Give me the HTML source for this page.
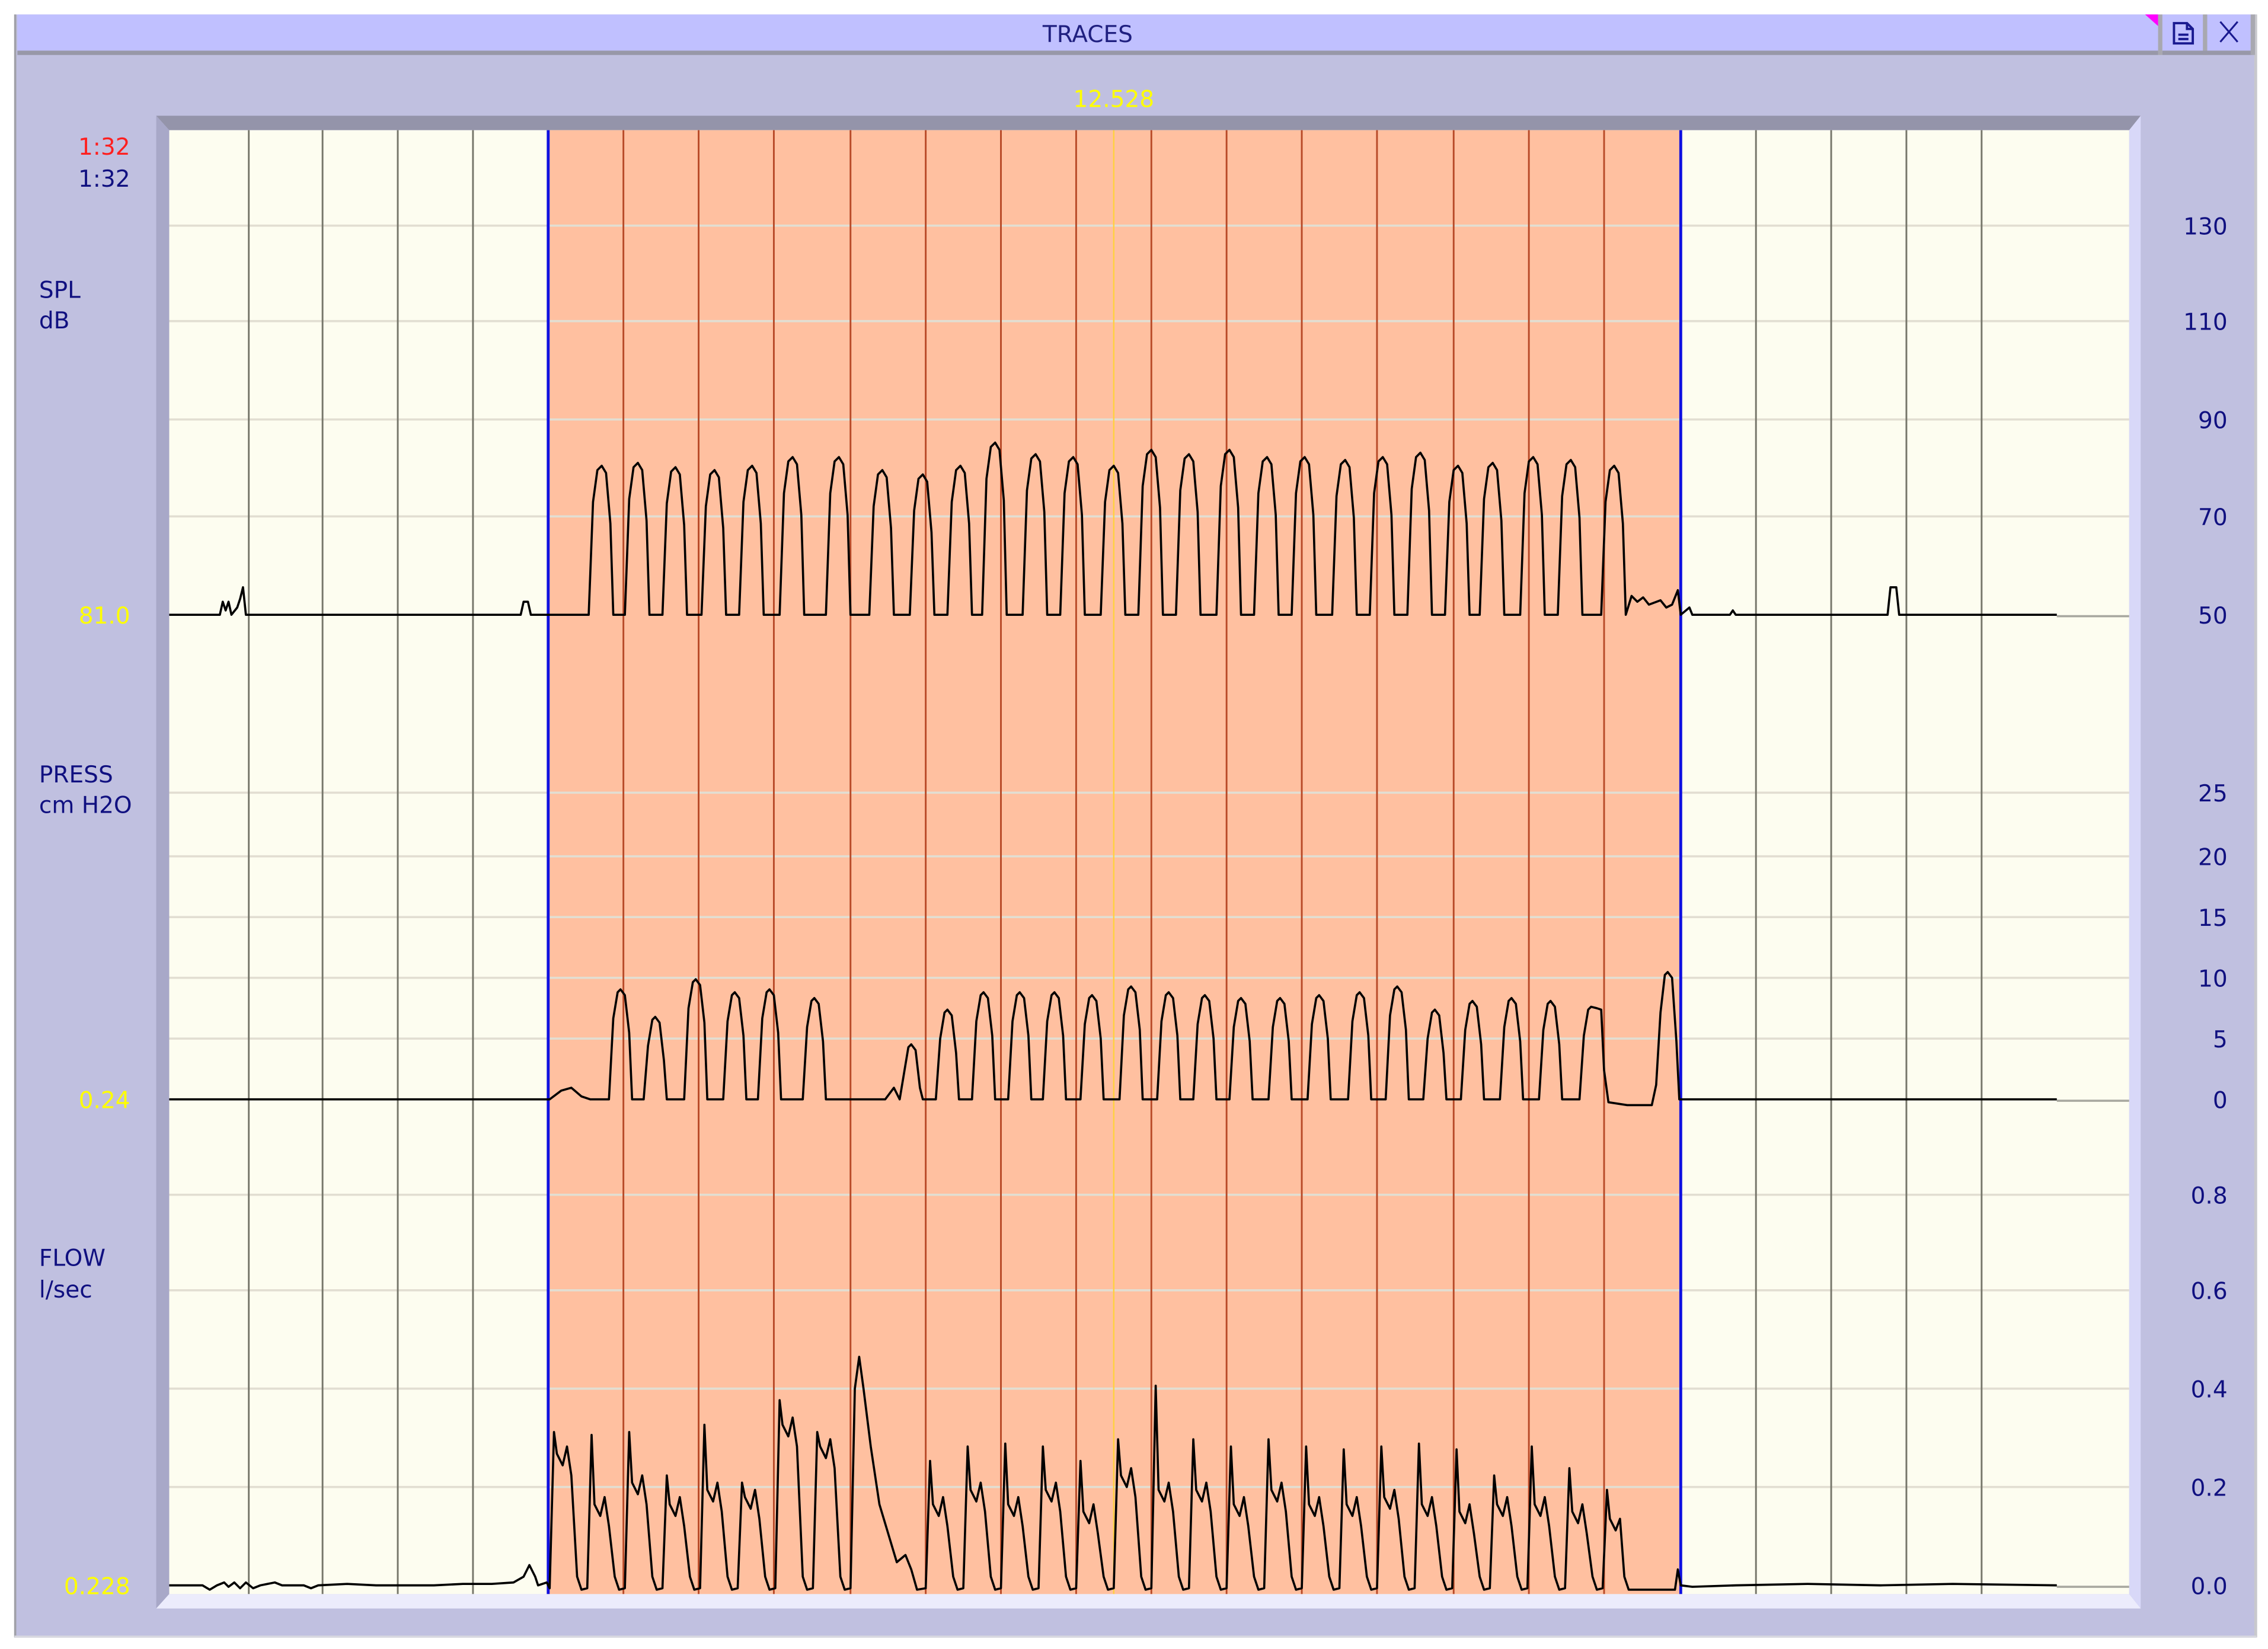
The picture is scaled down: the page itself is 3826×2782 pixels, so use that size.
<!DOCTYPE html>
<html><head><meta charset="utf-8"><style>
html,body{margin:0;padding:0;background:#fff;width:3826px;height:2782px;overflow:hidden}
svg{display:block}
text{font-family:"DejaVu Sans","Liberation Sans",sans-serif;font-size:16px}
</style></head><body>
<svg width="3826" height="2782" viewBox="0 0 1568 1140" preserveAspectRatio="none" xmlns="http://www.w3.org/2000/svg">
<rect x="0" y="0" width="1568" height="1140" fill="#fff"/>
<rect x="10" y="10" width="1550" height="1122" fill="#c0c0e0"/>
<line x1="10.5" y1="10" x2="10.5" y2="1132" stroke="#a0a0a8" stroke-width="1.5"/>
<line x1="1559.5" y1="10" x2="1559.5" y2="1132" stroke="#c8c8cc" stroke-width="2"/>
<line x1="10" y1="1131.5" x2="1560" y2="1131.5" stroke="#d8d8e0" stroke-width="1.5"/>
<rect x="12" y="10" width="1480" height="26" fill="#c0c0ff"/>
<rect x="12" y="35" width="1480" height="3" fill="#9898a8"/>
<polygon points="1483,10 1492,10 1492,18" fill="#ff00ff"/>
<rect x="1492" y="10" width="3" height="28" fill="#a8a8b0"/>
<rect x="1495" y="10" width="28" height="26" fill="#c0c0ff"/>
<rect x="1523" y="10" width="3" height="28" fill="#a8a8b0"/>
<rect x="1526" y="10" width="30" height="26" fill="#c0c0ff"/>
<rect x="1495" y="35" width="62" height="3" fill="#9898a8"/>
<rect x="1556" y="10" width="3" height="28" fill="#a8a8b0"/>
<g stroke="#1a1a90" fill="none" stroke-width="1.6">
<path d="M1503,16 L1512,16 L1516,20 L1516,30 L1503,30 Z"/>
<path d="M1512,16 L1512,20 L1516,20"/>
<line x1="1506" y1="24" x2="1513" y2="24"/><line x1="1506" y1="27" x2="1513" y2="27"/>
<path d="M1535,15 L1547,29 M1547,15 L1535,29" stroke-width="1.3"/>
</g>
<text x="752" y="29" text-anchor="middle" fill="#202080">TRACES</text>
<text x="770" y="74" text-anchor="middle" fill="#ffff00">12.528</text>
<polygon points="108,80 1480,80 1472,90 117,90" fill="#9494aa"/>
<polygon points="108,80 117,90 117,1102 108,1112" fill="#a8a8c8"/>
<polygon points="1480,80 1480,1112 1472,1102 1472,90" fill="#d8d8f8"/>
<polygon points="108,1112 117,1102 1472,1102 1480,1112" fill="#ececfc"/>
<rect x="117" y="90" width="1355" height="1012" fill="#fdfdf0"/>
<rect x="379" y="90" width="783" height="1012" fill="#ffc0a0"/>
<g stroke="#e2ded2" stroke-width="1.5">
<line x1="117" y1="156" x2="1472" y2="156"/><line x1="117" y1="222" x2="1472" y2="222"/>
<line x1="117" y1="290" x2="1472" y2="290"/><line x1="117" y1="357" x2="1472" y2="357"/>
<line x1="117" y1="548" x2="1472" y2="548"/><line x1="117" y1="592" x2="1472" y2="592"/>
<line x1="117" y1="634" x2="1472" y2="634"/><line x1="117" y1="676" x2="1472" y2="676"/>
<line x1="117" y1="718" x2="1472" y2="718"/><line x1="117" y1="826" x2="1472" y2="826"/>
<line x1="117" y1="892" x2="1472" y2="892"/><line x1="117" y1="960" x2="1472" y2="960"/>
<line x1="117" y1="1028" x2="1472" y2="1028"/>
</g>
<g stroke="#a8a8a0" stroke-width="1.5">
<line x1="1422" y1="426" x2="1472" y2="426"/><line x1="1422" y1="761" x2="1472" y2="761"/><line x1="1422" y1="1097" x2="1472" y2="1097"/>
</g>
<g stroke="#76766a" stroke-width="1.2">
<line x1="172" y1="90" x2="172" y2="1102"/><line x1="223" y1="90" x2="223" y2="1102"/>
<line x1="275" y1="90" x2="275" y2="1102"/><line x1="327" y1="90" x2="327" y2="1102"/>
<line x1="1214" y1="90" x2="1214" y2="1102"/><line x1="1266" y1="90" x2="1266" y2="1102"/>
<line x1="1318" y1="90" x2="1318" y2="1102"/><line x1="1370" y1="90" x2="1370" y2="1102"/>
</g>
<g stroke="#b84a28" stroke-width="1.2">
<line x1="431" y1="90" x2="431" y2="1102"/><line x1="483" y1="90" x2="483" y2="1102"/>
<line x1="535" y1="90" x2="535" y2="1102"/><line x1="588" y1="90" x2="588" y2="1102"/>
<line x1="640" y1="90" x2="640" y2="1102"/><line x1="692" y1="90" x2="692" y2="1102"/>
<line x1="744" y1="90" x2="744" y2="1102"/><line x1="796" y1="90" x2="796" y2="1102"/>
<line x1="848" y1="90" x2="848" y2="1102"/><line x1="900" y1="90" x2="900" y2="1102"/>
<line x1="952" y1="90" x2="952" y2="1102"/><line x1="1005" y1="90" x2="1005" y2="1102"/>
<line x1="1057" y1="90" x2="1057" y2="1102"/><line x1="1109" y1="90" x2="1109" y2="1102"/>
</g>
<line x1="770" y1="90" x2="770" y2="1102" stroke="#ffd040" stroke-width="1"/>
<g stroke="#1010e0" stroke-width="2">
<line x1="379" y1="90" x2="379" y2="1102"/><line x1="1162" y1="90" x2="1162" y2="1102"/>
</g>
<g fill="none" stroke="#000" stroke-width="1.5" stroke-linejoin="round">
<path d="M117,425 L152,425 L154,416 L156,422 L158,416 L160,425 L164,420 L166,414 L168,406 L170,425 L360,425 L362,416 L365,416 L367,425 L407,425 L410,347 L413,325 L416,322 L419,327 L422,362 L424,425 L432,425 L435,345 L438,323 L441,320 L444,325 L447,360 L449,425 L458,425 L461,348 L464,326 L467,323 L470,328 L473,363 L475,425 L485,425 L488,350 L491,328 L494,325 L497,330 L500,365 L502,425 L511,425 L514,347 L517,325 L520,322 L523,327 L526,362 L528,425 L539,425 L542,341 L545,319 L548,316 L551,321 L554,356 L556,425 L571,425 L574,341 L577,319 L580,316 L583,321 L586,356 L588,425 L601,425 L604,350 L607,328 L610,325 L613,330 L616,365 L618,425 L629,425 L632,353 L635,331 L638,328 L641,333 L644,368 L646,425 L655,425 L658,347 L661,325 L664,322 L667,327 L670,362 L672,425 L679,425 L682,331 L685,309 L688,306 L691,311 L694,346 L696,425 L707,425 L710,339 L713,317 L716,314 L719,319 L722,354 L724,425 L733,425 L736,341 L739,319 L742,316 L745,321 L748,356 L750,425 L761,425 L764,347 L767,325 L770,322 L773,327 L776,362 L778,425 L787,425 L790,336 L793,314 L796,311 L799,316 L802,351 L804,425 L813,425 L816,339 L819,317 L822,314 L825,319 L828,354 L830,425 L841,425 L844,336 L847,314 L850,311 L853,316 L856,351 L858,425 L867,425 L870,341 L873,319 L876,316 L879,321 L882,356 L884,425 L893,425 L896,341 L899,319 L902,316 L905,321 L908,356 L910,425 L921,425 L924,343 L927,321 L930,318 L933,323 L936,358 L938,425 L947,425 L950,341 L953,319 L956,316 L959,321 L962,356 L964,425 L973,425 L976,338 L979,316 L982,313 L985,318 L988,353 L990,425 L999,425 L1002,347 L1005,325 L1008,322 L1011,327 L1014,362 L1016,425 L1023,425 L1026,345 L1029,323 L1032,320 L1035,325 L1038,360 L1040,425 L1051,425 L1054,341 L1057,319 L1060,316 L1063,321 L1066,356 L1068,425 L1077,425 L1080,343 L1083,321 L1086,318 L1089,323 L1092,358 L1094,425 L1107,425 L1110,347 L1113,325 L1116,322 L1119,327 L1122,362 L1124,425 L1128,412 L1132,416 L1136,413 L1140,418 L1148,415 L1152,420 L1156,418 L1160,408 L1162,425 L1168,420 L1170,425 L1196,425 L1198,422 L1200,425 L1305,425 L1307,406 L1311,406 L1313,425 L1422,425"/>
<path d="M117,760 L380,760 L388,754 L395,752 L402,758 L408,760 L421,760 L424,704 L427,686 L429,684 L432,688 L435,714 L437,760 L445,760 L448,723 L451,705 L453,703 L456,707 L459,733 L461,760 L473,760 L476,697 L479,679 L481,677 L484,681 L487,707 L489,760 L500,760 L503,706 L506,688 L508,686 L511,690 L514,716 L516,760 L524,760 L527,704 L530,686 L532,684 L535,688 L538,714 L540,760 L555,760 L558,710 L561,692 L563,690 L566,694 L569,720 L571,760 L612,760 L618,752 L622,760 L625,742 L628,724 L630,722 L633,726 L636,752 L638,760 L647,760 L650,718 L653,700 L655,698 L658,702 L661,728 L663,760 L672,760 L675,706 L678,688 L680,686 L683,690 L686,716 L688,760 L697,760 L700,706 L703,688 L705,686 L708,690 L711,716 L713,760 L721,760 L724,706 L727,688 L729,686 L732,690 L735,716 L737,760 L747,760 L750,708 L753,690 L755,688 L758,692 L761,718 L763,760 L774,760 L777,702 L780,684 L782,682 L785,686 L788,712 L790,760 L800,760 L803,706 L806,688 L808,686 L811,690 L814,716 L816,760 L825,760 L828,708 L831,690 L833,688 L836,692 L839,718 L841,760 L850,760 L853,710 L856,692 L858,690 L861,694 L864,720 L866,760 L877,760 L880,710 L883,692 L885,690 L888,694 L891,720 L893,760 L904,760 L907,708 L910,690 L912,688 L915,692 L918,718 L920,760 L932,760 L935,706 L938,688 L940,686 L943,690 L946,716 L948,760 L958,760 L961,702 L964,684 L966,682 L969,686 L972,712 L974,760 L984,760 L987,718 L990,700 L992,698 L995,702 L998,728 L1000,760 L1010,760 L1013,712 L1016,694 L1018,692 L1021,696 L1024,722 L1026,760 L1037,760 L1040,710 L1043,692 L1045,690 L1048,694 L1051,720 L1053,760 L1064,760 L1067,712 L1070,694 L1072,692 L1075,696 L1078,722 L1080,760 L1092,760 L1095,716 L1098,698 L1100,696 L1104,697 L1107,698 L1109,740 L1112,762 L1125,764 L1142,764 L1145,750 L1148,700 L1151,674 L1153,672 L1156,676 L1159,720 L1161,760 L1422,760"/>
<path d="M117,1096 L140,1096 L145,1099 L150,1096 L155,1094 L158,1097 L162,1094 L166,1098 L170,1094 L175,1098 L180,1096 L185,1095 L190,1094 L195,1096 L210,1096 L215,1098 L220,1096 L240,1095 L260,1096 L300,1096 L320,1095 L340,1095 L355,1094 L362,1090 L366,1082 L370,1090 L372,1096 L378,1094 L380,1098 L383,990 L385,1005 L389,1013 L392,1000 L395,1020 L399,1090 L402,1099 L406,1098 L409,992 L411,1040 L415,1048 L418,1035 L421,1055 L425,1090 L428,1099 L432,1098 L435,990 L437,1025 L441,1033 L444,1020 L447,1040 L451,1090 L454,1099 L458,1098 L461,1020 L463,1040 L467,1048 L470,1035 L473,1055 L477,1090 L480,1099 L484,1098 L487,985 L489,1030 L493,1038 L496,1025 L499,1045 L503,1090 L506,1099 L510,1098 L513,1025 L515,1035 L519,1043 L522,1030 L525,1050 L529,1090 L532,1099 L536,1098 L539,968 L541,985 L545,993 L548,980 L551,1000 L555,1090 L558,1099 L562,1098 L565,990 L567,1000 L571,1008 L574,995 L577,1015 L581,1090 L584,1099 L588,1098 L591,960 L594,938 L597,960 L602,1000 L608,1040 L614,1060 L620,1080 L626,1075 L630,1085 L634,1099 L640,1098 L643,1010 L645,1040 L649,1048 L652,1035 L655,1055 L659,1090 L662,1099 L666,1098 L669,1000 L671,1030 L675,1038 L678,1025 L681,1045 L685,1090 L688,1099 L692,1098 L695,998 L697,1040 L701,1048 L704,1035 L707,1055 L711,1090 L714,1099 L718,1098 L721,1000 L723,1030 L727,1038 L730,1025 L733,1045 L737,1090 L740,1099 L744,1098 L747,1010 L749,1045 L753,1053 L756,1040 L759,1060 L763,1090 L766,1099 L770,1098 L773,995 L775,1020 L779,1028 L782,1015 L785,1035 L789,1090 L792,1099 L796,1098 L799,958 L801,1030 L805,1038 L808,1025 L811,1045 L815,1090 L818,1099 L822,1098 L825,995 L827,1030 L831,1038 L834,1025 L837,1045 L841,1090 L844,1099 L848,1098 L851,1000 L853,1040 L857,1048 L860,1035 L863,1055 L867,1090 L870,1099 L874,1098 L877,995 L879,1030 L883,1038 L886,1025 L889,1045 L893,1090 L896,1099 L900,1098 L903,1000 L905,1040 L909,1048 L912,1035 L915,1055 L919,1090 L922,1099 L926,1098 L929,1002 L931,1040 L935,1048 L938,1035 L941,1055 L945,1090 L948,1099 L952,1098 L955,1000 L957,1035 L961,1043 L964,1030 L967,1050 L971,1090 L974,1099 L978,1098 L981,998 L983,1040 L987,1048 L990,1035 L993,1055 L997,1090 L1000,1099 L1004,1098 L1007,1002 L1009,1045 L1013,1053 L1016,1040 L1019,1060 L1023,1090 L1026,1099 L1030,1098 L1033,1020 L1035,1040 L1039,1048 L1042,1035 L1045,1055 L1049,1090 L1052,1099 L1056,1098 L1059,1000 L1061,1040 L1065,1048 L1068,1035 L1071,1055 L1075,1090 L1078,1099 L1082,1098 L1085,1015 L1087,1045 L1091,1053 L1094,1040 L1097,1060 L1101,1090 L1104,1099 L1108,1098 L1111,1030 L1113,1050 L1117,1058 L1120,1050 L1123,1090 L1126,1099 L1158,1099 L1160,1085 L1162,1096 L1170,1097 L1200,1096 L1250,1095 L1300,1096 L1350,1095 L1422,1096"/>
</g>
<text x="90" y="107" text-anchor="end" fill="#ff2020">1:32</text>
<text x="90" y="129" text-anchor="end" fill="#101080">1:32</text>
<g fill="#101080">
<text x="27" y="206">SPL</text><text x="27" y="227">dB</text>
<text x="27" y="541">PRESS</text><text x="27" y="562">cm H2O</text>
<text x="27" y="875">FLOW</text><text x="27" y="897">l/sec</text>
</g>
<g fill="#ffff00" text-anchor="end">
<text x="90" y="431">81.0</text><text x="90" y="766">0.24</text><text x="90" y="1102">0.228</text>
</g>
<g fill="#101080" text-anchor="end">
<text x="1540" y="162">130</text><text x="1540" y="228">110</text><text x="1540" y="296">90</text>
<text x="1540" y="363">70</text><text x="1540" y="431">50</text><text x="1540" y="554">25</text>
<text x="1540" y="598">20</text><text x="1540" y="640">15</text><text x="1540" y="682">10</text>
<text x="1540" y="724">5</text><text x="1540" y="766">0</text><text x="1540" y="832">0.8</text>
<text x="1540" y="898">0.6</text><text x="1540" y="966">0.4</text><text x="1540" y="1034">0.2</text>
<text x="1540" y="1102">0.0</text>
</g>
</svg>
</body></html>
